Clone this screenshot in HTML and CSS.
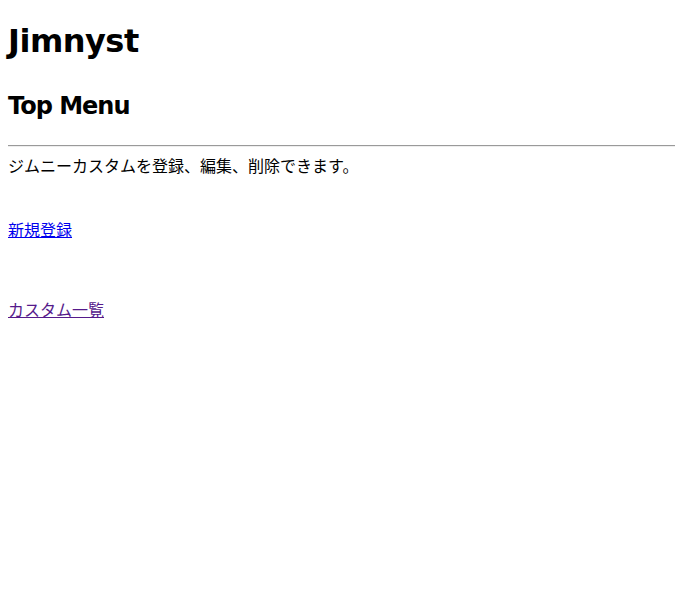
FILE: index.html
```html
<!DOCTYPE html>
<html lang="ja">
<head>
<meta charset="utf-8">
<title>Jimnyst</title>
<link rel="stylesheet" href="styles.css">
</head>
<body>
<h1 class="site-title">Jimnyst</h1>
<h2 class="page-title">Top Menu</h2>
<hr class="divider">
<p class="intro">ジムニーカスタムを登録、編集、削除できます。</p>
<div class="menu">
  <a class="menu-link" href="#new">新規登録</a>
  <a class="menu-link menu-link--visited" href="#list">カスタム一覧</a>
</div>
</body>
</html>
```
FILE: styles.css
```css
body {
  margin: 0;
  padding: 0 8px;
  font-family: "DejaVu Sans", "Noto Sans CJK JP", sans-serif;
  color: #000;
  background: #fff;
}

.site-title {
  margin: 23px 0 0;
  font-size: 32px;
  line-height: 37px;
  font-weight: bold;
  letter-spacing: -0.5px;
}

.page-title {
  margin: 32px 0 0;
  font-size: 24px;
  line-height: 28px;
  font-weight: bold;
  letter-spacing: -1px;
}

.divider {
  margin: 25px -8px 0 0;
  border: none;
  border-top: 1px solid #9a9a9a;
  border-bottom: 1px solid #eeeeee;
  height: 0;
}

.intro {
  margin: 6px 0 0;
  font-family: "Noto Sans CJK JP", sans-serif;
  font-size: 16px;
  line-height: 24px;
}

.menu {
  display: flex;
  flex-direction: column;
  align-items: flex-start;
  gap: 56px;
  margin-top: 40px;
}

.menu-link {
  font-family: "Noto Sans CJK JP", sans-serif;
  font-size: 16px;
  line-height: 24px;
  color: #0000ee;
  text-decoration: underline;
}

.menu-link--visited {
  color: #551a8b;
}
```
